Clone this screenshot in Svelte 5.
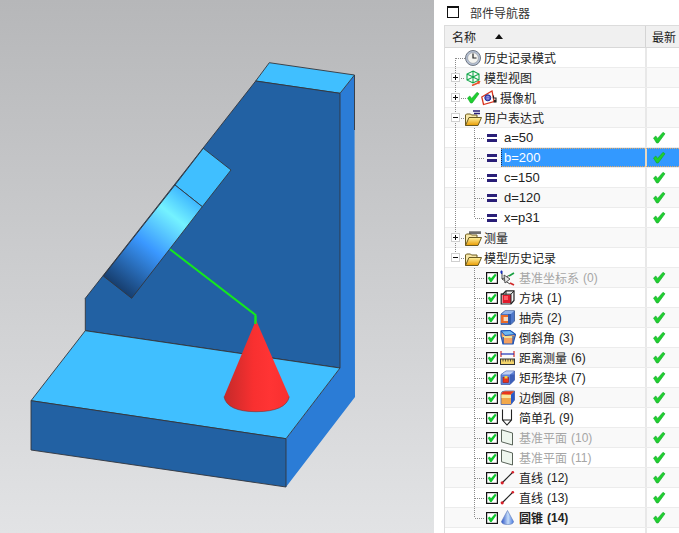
<script>
	const rows = [
		{ kind: 'top', icon: 'clock', text: '历史记录模式' },
		{ kind: 'top', exp: '+', icon: 'view', text: '模型视图' },
		{ kind: 'cam', exp: '+', icon: 'camera', text: '摄像机' },
		{ kind: 'top', exp: '-', icon: 'folderExpr', text: '用户表达式' },
		{ kind: 'eq', text: 'a=50', ok: true },
		{ kind: 'eq', text: 'b=200', ok: true, selected: true },
		{ kind: 'eq', text: 'c=150', ok: true },
		{ kind: 'eq', text: 'd=120', ok: true },
		{ kind: 'eq', text: 'x=p31', ok: true },
		{ kind: 'top', exp: '+', icon: 'folderRuler', text: '测量' },
		{ kind: 'top', exp: '-', icon: 'folder', text: '模型历史记录' },
		{ kind: 'feat', icon: 'csys', text: '基准坐标系', num: '(0)', ok: true, dim: true },
		{ kind: 'feat', icon: 'block', text: '方块', num: '(1)', ok: true },
		{ kind: 'feat', icon: 'shell', text: '抽壳', num: '(2)', ok: true },
		{ kind: 'feat', icon: 'chamfer', text: '倒斜角', num: '(3)', ok: true },
		{ kind: 'feat', icon: 'measure', text: '距离测量', num: '(6)', ok: true },
		{ kind: 'feat', icon: 'pad', text: '矩形垫块', num: '(7)', ok: true },
		{ kind: 'feat', icon: 'blend', text: '边倒圆', num: '(8)', ok: true },
		{ kind: 'feat', icon: 'hole', text: '简单孔', num: '(9)', ok: true },
		{ kind: 'feat', icon: 'plane', text: '基准平面', num: '(10)', ok: true, dim: true },
		{ kind: 'feat', icon: 'plane', text: '基准平面', num: '(11)', ok: true, dim: true },
		{ kind: 'feat', icon: 'line', text: '直线', num: '(12)', ok: true },
		{ kind: 'feat', icon: 'line', text: '直线', num: '(13)', ok: true },
		{ kind: 'feat', icon: 'cone', text: '圆锥', num: '(14)', ok: true, bold: true }
	];

	const checkPath = 'M0.5 6 L2.8 4 L4.6 6.4 L10 0.3 L12 1.8 L5.2 11 L3.6 11 Z';
</script>

{#snippet check()}
	<svg class="check" width="13" height="12" viewBox="0 0 13 12">
		<path d={checkPath} fill="#1fd02f" stroke="#12a52a" stroke-width="0.6" />
	</svg>
{/snippet}

{#snippet folderShape(name)}
	<svg class="ico" width="17" height="16" viewBox="0 0 17 16">
		<defs>
			<linearGradient id="fold-{name}" x1="0" y1="0" x2="0" y2="1">
				<stop offset="0" stop-color="#fff2a0" />
				<stop offset="1" stop-color="#e89a00" />
			</linearGradient>
		</defs>
		<path d="M0.5 15.5 V5 L1.5 4 H5.5 L6.5 5 H12 V7" fill="#f6e6a8" stroke="#6b5a20" />
		<path d="M0.5 15.5 L4 7.5 H16.5 L13 15.5 Z" fill="url(#fold-{name})" stroke="#6b5a20" />
		{#if name === 'folderExpr'}
			<path d="M8 1 H15 M9 3.5 H15" stroke="#2a1f78" stroke-width="1.4" />
		{:else if name === 'folderRuler'}
			<path d="M4 2.5 H16" stroke="#333" stroke-width="2.4" />
			<path d="M5 1 V3 M7 1 V3 M9 1 V3 M11 1 V3 M13 1 V3 M15 1 V3" stroke="#ddd" stroke-width="0.7" />
		{/if}
	</svg>
{/snippet}

{#snippet icon(name)}
	{#if name === 'clock'}
		<svg class="ico" width="16" height="16" viewBox="0 0 16 16">
			<circle cx="8" cy="8" r="7.5" fill="#b6c2d6" stroke="#6f7680" />
			<circle cx="8" cy="8" r="5.4" fill="#f4f4f0" stroke="#8a8f98" stroke-width="0.6" />
			<path d="M8 3.6 V8 H11.5" fill="none" stroke="#222" stroke-width="1.2" />
		</svg>
	{:else if name === 'view'}
		<svg class="ico" width="16" height="16" viewBox="0 0 16 16">
			<path d="M8 1 L14 4 V10 L8 13 L2 10 V4 Z M2 4 L8 7 L14 4 M8 7 V13 M8 1 V7 M2 10 L8 7 L14 10" fill="none" stroke="#12a84a" stroke-width="1.1" />
			<path d="M7 15.5 L14 12.5" stroke="#e8502a" stroke-width="1.6" />
			<path d="M15.5 11 L12 11 L14 14.5 Z" fill="#e8502a" />
		</svg>
	{:else if name === 'camera'}
		<svg class="ico" width="16" height="16" viewBox="0 0 16 16">
			<path d="M0.8 7 L11 1 L13 11.5 L2.5 14.5 Z" fill="#fff" stroke="#d8341f" stroke-width="1.3" />
			<circle cx="6.8" cy="7.8" r="3" fill="#5a58c8" stroke="#1d2a90" />
			<path d="M5.5 6.8 H8 M5.5 8.8 H8" stroke="#c8c8f0" stroke-width="0.7" />
			<path d="M12 8 H15 V12 H12.5 M12.5 8 V5.5" fill="none" stroke="#222" stroke-width="1.1" />
			<circle cx="14" cy="11" r="1.2" fill="#222" />
		</svg>
	{:else if name === 'folderExpr' || name === 'folderRuler' || name === 'folder'}
		{@render folderShape(name)}
	{:else if name === 'csys'}
		<svg class="ico" width="15" height="16" viewBox="0 0 15 16">
			<path d="M2 3 V9 L9 5.5 M2 9 L10 14" fill="none" stroke="#444" stroke-width="1" />
			<path d="M4 5 L10 9 L5 13 Z" fill="#e6e6e6" stroke="#555" />
			<path d="M1.5 0.5 V4 M0 2 H3" stroke="#1a2fb8" stroke-width="1.2" />
			<path d="M9 6 L14 3" stroke="#17a040" stroke-width="1.6" />
			<path d="M10 13 L14 15" stroke="#d02a2a" stroke-width="1.6" />
		</svg>
	{:else if name === 'block'}
		<svg class="ico" width="15" height="15" viewBox="0 0 15 15">
			<path d="M3 4 L6 0.8 H14 V10.5 L11 14 H1.2 V4 Z" fill="#f4f4f4" stroke="#222" stroke-width="1.2" />
			<rect x="2.5" y="5" width="8.5" height="8" fill="#e01a2a" />
			<path d="M6 1 V4.5 M1 4.2 H11 L14 1 M11 4.2 V14" fill="none" stroke="#222" />
			<rect x="4" y="6" width="4" height="4" fill="#ff5a66" />
		</svg>
	{:else if name === 'shell'}
		<svg class="ico" width="15" height="15" viewBox="0 0 15 15">
			<path d="M1 4 L5 0.8 H14.5 V11 L11 14.5 H1 Z" fill="#4d76c8" stroke="#35558f" stroke-width="0.8" />
			<path d="M5 1 H14 L11 4 H2 Z" fill="#8fb2ea" />
			<rect x="1" y="5" width="7" height="8" fill="#e86a28" />
			<rect x="3.6" y="7" width="4.4" height="4" fill="#f8d8b8" />
			<rect x="8" y="4" width="3" height="10" fill="#2f57a8" />
		</svg>
	{:else if name === 'chamfer'}
		<svg class="ico" width="16" height="15" viewBox="0 0 16 15">
			<path d="M1 1 L10 0.5 L15.5 4.5 L13 14 H3 L1 6 Z" fill="#f4a060" stroke="#1f55b8" stroke-width="1.2" />
			<path d="M1 1 L10 0.5 L15.5 4.5 L5 5.5 Z" fill="#6fb8f0" stroke="#1f55b8" />
			<path d="M3 7 H13" stroke="#f5e090" stroke-width="2" />
			<path d="M3.2 14 V7 M13 14 V6" stroke="#1f55b8" stroke-width="1.2" />
		</svg>
	{:else if name === 'measure'}
		<svg class="ico" width="15" height="15" viewBox="0 0 15 15">
			<path d="M1 1 V7 M14 1 V7" stroke="#d02a2a" stroke-width="1.2" />
			<path d="M1 4 H14" stroke="#1a2fb8" stroke-width="1.2" />
			<rect x="0.5" y="9" width="14" height="5.5" fill="#f4d46a" stroke="#333" />
			<path d="M3 9 V11.5 M5.5 9 V11.5 M8 9 V11.5 M10.5 9 V11.5 M13 9 V11.5" stroke="#333" stroke-width="0.8" />
		</svg>
	{:else if name === 'pad'}
		<svg class="ico" width="15" height="15" viewBox="0 0 15 15">
			<path d="M1 4.5 L6 1 H14.5 V10 L10 14.5 H1 Z" fill="#5f83d8" stroke="#4a62a8" stroke-width="0.8" />
			<path d="M1.5 4.5 L6 1.2 H14 L10 4.5 Z" fill="#c0d0f4" />
			<path d="M10 4.5 H14.5 V10 L10 14.5 Z" fill="#3d5fb8" />
			<rect x="3" y="7.5" width="5.5" height="5" fill="#e8341f" stroke="#a01a10" stroke-width="0.6" />
			<rect x="4.5" y="6" width="3" height="2.5" fill="#f6d040" />
		</svg>
	{:else if name === 'blend'}
		<svg class="ico" width="15" height="15" viewBox="0 0 15 15">
			<path d="M1 4 Q1 1 5 1 H14.5 V10 L11 14.5 H1 Z" fill="#f2a84a" stroke="#4a62a8" stroke-width="0.8" />
			<path d="M1.5 4 Q2 1.4 5 1.4 H14 L10.5 4.4 Z" fill="#e8341f" />
			<path d="M11 4.4 L14.5 1.2 V10 L11 14.5 Z" fill="#2a5ac8" />
			<rect x="1.5" y="5" width="9.5" height="3" fill="#f8e8a0" />
		</svg>
	{:else if name === 'hole'}
		<svg class="ico" width="14" height="17" viewBox="0 0 14 17">
			<path d="M2.5 0.5 V11 L7 16 L11.5 11 V0.5 M2.5 11 H11.5" fill="#fff" stroke="#222" stroke-width="1.1" />
		</svg>
	{:else if name === 'plane'}
		<svg class="ico" width="14" height="17" viewBox="0 0 14 17">
			<path d="M1.5 0.8 L12.5 4 V16 L1.5 12.8 Z" fill="#eef6ee" stroke="#5a645a" />
		</svg>
	{:else if name === 'line'}
		<svg class="ico" width="15" height="15" viewBox="0 0 15 15">
			<path d="M2 13 L13 2" stroke="#222" stroke-width="1.2" />
			<circle cx="2.2" cy="12.8" r="1.6" fill="#d8202a" />
			<circle cx="12.8" cy="2.2" r="1.3" fill="#d8202a" />
		</svg>
	{:else if name === 'cone'}
		<svg class="ico" width="15" height="15" viewBox="0 0 15 15">
			<defs>
				<linearGradient id="mini-cone" x1="0" y1="0" x2="1" y2="0">
					<stop offset="0" stop-color="#2f55c8" />
					<stop offset="0.55" stop-color="#c4dcf8" />
					<stop offset="1" stop-color="#4a7ae0" />
				</linearGradient>
			</defs>
			<path d="M7.5 0.5 L13.5 11.5 Q13.5 14.5 7.5 14.5 Q1.5 14.5 1.5 11.5 Z" fill="url(#mini-cone)" stroke="#5a78b8" stroke-width="0.6" />
		</svg>
	{/if}
{/snippet}

<div class="screen">
	<div class="view">
		<svg width="434" height="533" viewBox="0 0 434 533">
			<defs>
				<linearGradient id="disk" gradientUnits="userSpaceOnUse" x1="190" y1="197" x2="118" y2="287">
					<stop offset="0" stop-color="#3fb8ff" />
					<stop offset="0.22" stop-color="#74f2ff" />
					<stop offset="0.56" stop-color="#3a98ff" />
					<stop offset="1" stop-color="#173f70" />
				</linearGradient>
				<linearGradient id="redcone" gradientUnits="userSpaceOnUse" x1="224" y1="0" x2="289" y2="0">
					<stop offset="0" stop-color="#c42a2a" />
					<stop offset="0.45" stop-color="#f83030" />
					<stop offset="0.7" stop-color="#ff3434" />
					<stop offset="1" stop-color="#f83030" />
				</linearGradient>
			</defs>
			<path d="M354.5 75 L355 397 L286 487 V438.7 L340 368 V93.3 Z" fill="#2b7cd6" />
			<g stroke="#33363c" stroke-width="0.9" stroke-linejoin="round">
				<path d="M269.3 62.7 L354.5 75 L340 93.3 L255.7 81 Z" fill="#40bfff" />
				<path d="M255.7 81 L340 93.3 V368 L85.3 330.7 V298.3 Z" fill="#2261a3" />
				<path d="M354.5 75 V130" fill="none" />
				<path d="M85.3 330.7 L340 368 L286 438.7 L31 400.7 Z" fill="#40bfff" />
				<path d="M31 400.7 L286 438.7 V487 L31 450 Z" fill="#2261a3" />
				<path d="M203.3 148.3 L231 170 L202.3 206.7 L175 185 Z" fill="#40bfff" />
				<path d="M175 185 L202.3 206.7 L131.7 298.3 L103.3 276 Z" fill="url(#disk)" />
			</g>
			<path d="M170 249.3 L255.5 315 V324" fill="none" stroke="#14e81e" stroke-width="2" />
			<path d="M256 320 L289.3 396.7 Q286 411.5 256 411.7 Q227 411.5 224 396.7 Z" fill="url(#redcone)" />
			<path d="M224 396.7 Q227 411.5 256 411.7 Q286 411.5 289.3 396.7" fill="none" stroke="#7a3030" stroke-width="0.6" />
			<path d="M255.5 316 V324" stroke="#14e81e" stroke-width="2" />
		</svg>
	</div>

	<aside class="panel">
		<div class="title">
			<span class="pin"></span>
			<span class="cjk">部件导航器</span>
		</div>
		<div class="table">
			<div class="head">
				<div class="hname">
					<span class="cjk">名称</span>
					<span class="sort"></span>
				</div>
				<div class="hlatest"><span class="cjk">最新</span></div>
			</div>
			<div class="tree">
				{#each rows as row, i}
					<div class="row" class:alt={i % 2 === 1} class:selected={row.selected}>
						<div class="name {row.kind}">
							<span class="gutter">
								{#if row.exp}
									<span class="exp"><i class="h"></i>{#if row.exp === '+'}<i class="v"></i>{/if}</span>
								{/if}
							</span>
							{#if row.kind === 'cam'}{@render check()}{/if}
							{#if row.kind === 'feat'}
								<svg class="box" width="12" height="12" viewBox="0 0 12 12">
									<rect x="0.6" y="0.6" width="10.8" height="10.8" fill="#fff" stroke="#111" stroke-width="1.2" />
									<path d="M1.8 6 L3.6 4.4 L5 6.2 L9 1.8 L10.6 3 L5.6 10 L4.2 10 Z" fill="#10c82e" />
								</svg>
							{/if}
							{#if row.kind === 'eq'}
								<span class="eqmark"><i></i><i></i></span>
							{:else}
								<span class="slot">{@render icon(row.icon)}</span>
							{/if}
							<span class="label" class:dim={row.dim} class:bold={row.bold}>
								<span class="cjk">{row.text}</span>{#if row.num}<span class="num">{row.num}</span>{/if}
							</span>
						</div>
						<div class="latest">{#if row.ok}{@render check()}{/if}</div>
					</div>
				{/each}
				<svg class="guides" width="234" height="480" viewBox="445 48 234 480">
					<path d="M455.5 58 V73 M455.5 83 V93 M455.5 103 V113 M455.5 123 V233 M455.5 243 V253 M456 58.5 H465 M461 78.5 H465 M461 98.5 H466 M461 118.5 H465 M461 238.5 H465 M461 258.5 H465 M474.5 128 V218 M475 138.5 H485 M475 158.5 H485 M475 178.5 H485 M475 198.5 H485 M475 218.5 H485 M474.5 268 V518 M475 278.5 H485 M475 298.5 H485 M475 318.5 H485 M475 338.5 H485 M475 358.5 H485 M475 378.5 H485 M475 398.5 H485 M475 418.5 H485 M475 438.5 H485 M475 458.5 H485 M475 478.5 H485 M475 498.5 H485 M475 518.5 H485" fill="none" stroke="#8a8a8a" stroke-dasharray="1 1" />
				</svg>
			</div>
		</div>
	</aside>
</div>

<style>
	:global(body) {
		margin: 0;
		background: #fff;
	}

	.screen {
		display: flex;
		width: 679px;
		height: 533px;
		overflow: hidden;
		font-family: "Liberation Sans", "Noto Sans CJK SC", sans-serif;
		font-size: 12px;
		color: #222;
	}

	.view {
		flex: 0 0 434px;
		height: 533px;
		background: linear-gradient(#b6b7b9, #e2e3e5);
	}

	.view svg {
		display: block;
	}

	.panel {
		flex: 1;
		display: flex;
		flex-direction: column;
		min-width: 0;
		padding-left: 10px;
		background: #fff;
	}

	.cjk {
		font-family: "Noto Sans CJK SC", sans-serif;
	}

	.title {
		display: flex;
		align-items: center;
		height: 25px;
		box-sizing: border-box;
		padding: 0 0 1px 3px;
		color: #333;
	}

	.pin {
		width: 10px;
		height: 9px;
		margin-right: 11px;
		border: 1px solid #111;
		border-top-width: 2px;
	}

	.table {
		flex: 1;
		border-top: 1px solid #dcdcdc;
		border-left: 1px solid #dcdcdc;
	}

	.head {
		display: grid;
		grid-template-columns: 200px 1fr;
		height: 21px;
		background: #f0f0f0;
		border-bottom: 1px solid #d8d8d8;
	}

	.hname,
	.hlatest {
		display: flex;
		align-items: center;
	}

	.hname {
		padding-left: 7px;
	}

	.hlatest {
		padding-left: 6px;
		border-left: 1px solid #d4d4d4;
	}

	.sort {
		width: 0;
		height: 0;
		margin-left: 19px;
		border-left: 4.5px solid transparent;
		border-right: 4.5px solid transparent;
		border-bottom: 5px solid #111;
	}

	.tree {
		position: relative;
		height: 100%;
		background: linear-gradient(90deg, transparent 200px, #e8e8e8 200px, #e8e8e8 202px, transparent 202px);
	}

	.guides {
		position: absolute;
		top: 0;
		left: 0;
		pointer-events: none;
	}

	.row {
		display: grid;
		grid-template-columns: 200px 1fr;
		height: 20px;
		box-sizing: border-box;
		border-bottom: 1px solid #ececec;
		background: #fff;
	}

	.row.alt {
		background: #f9f9f9;
	}

	.name {
		display: flex;
		align-items: center;
		min-width: 0;
	}

	.latest {
		display: flex;
		align-items: center;
		padding-left: 6px;
		border-left: 2px solid #e8e8e8;
	}

	.gutter {
		flex: none;
		display: flex;
		align-items: center;
		width: 20px;
		padding-left: 6px;
		box-sizing: border-box;
	}

	.cam .gutter {
		width: 22px;
	}

	.eq .gutter {
		width: 42px;
	}

	.feat .gutter {
		width: 41px;
	}

	.exp {
		position: relative;
		width: 9px;
		height: 9px;
		box-sizing: border-box;
		border: 1px solid #cfcfcf;
		background: #fff;
	}

	.exp i {
		position: absolute;
		background: #111;
	}

	.exp .h {
		left: 1px;
		top: 3px;
		width: 5px;
		height: 1px;
	}

	.exp .v {
		left: 3px;
		top: 1px;
		width: 1px;
		height: 5px;
	}

	.slot {
		flex: none;
		display: flex;
		width: 16px;
	}

	.feat .slot {
		width: 15px;
	}

	.ico,
	.check,
	.box {
		flex: none;
		display: block;
	}

	.check {
		margin-top: 1px;
	}

	.cam .check {
		margin-right: 1px;
	}

	.box {
		margin-right: 2px;
	}

	.eqmark {
		flex: none;
		display: flex;
		flex-direction: column;
		gap: 2px;
		width: 10px;
		margin-right: 4px;
	}

	.eqmark i {
		height: 3px;
		background: #2a1f78;
	}

	.label {
		flex: 1;
		display: flex;
		align-items: center;
		height: 100%;
		padding-left: 3px;
		white-space: nowrap;
	}

	.eq .cjk {
		font-family: "Liberation Sans", sans-serif;
		font-size: 13px;
	}

	.feat .label {
		padding-left: 4px;
	}

	.num {
		margin-left: 4px;
	}

	.dim {
		color: #a6a6a6;
	}

	.bold {
		font-weight: 700;
	}

	.selected .label {
		background: #3399ff;
		color: #fff;
		box-sizing: border-box;
		border-top: 1px dotted #e0a868;
		border-bottom: 1px dotted #e0a868;
		border-left: 1px dotted #1a2a50;
		padding-left: 2px;
	}

	.selected .latest {
		background: #3399ff;
		border-left-color: #e8d8c0;
		border-top: 1px dotted #e0a868;
		border-bottom: 1px dotted #e0a868;
	}
</style>
